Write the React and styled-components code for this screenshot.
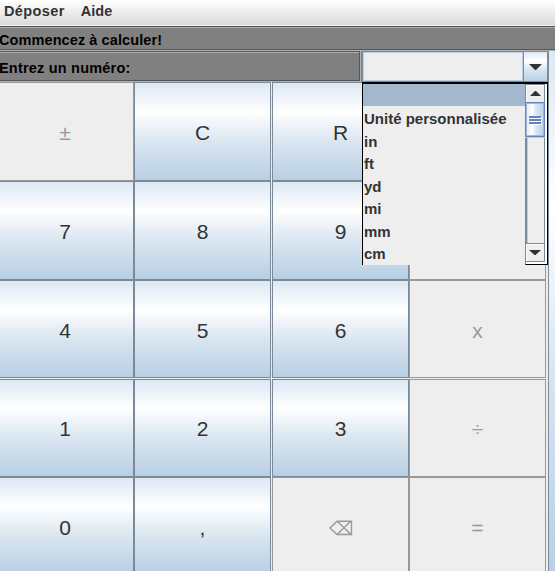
import React from "react";
import styled, { createGlobalStyle } from "styled-components";

const Global = createGlobalStyle`
  * { box-sizing: border-box; }
  body { margin: 0; overflow: hidden; font-family: "Liberation Sans", Arial, sans-serif; }
`;
const metal = "linear-gradient(to bottom, #dde8f3 0%, #ffffff 30%, #dae6f0 60%, #b8cfe5 100%)";

const Window = styled.div`
  width: 555px; height: 571px; overflow: hidden; background: #eeeeee;
  display: flex; flex-direction: column;
`;
const MenuBar = styled.nav`
  height: 26px; flex: none; display: flex; gap: 16px; padding: 2px 0 0 4px;
  background: linear-gradient(#ffffff, #dadada); border-bottom: 1px solid #eeeeee;
  font-size: 14.5px; font-weight: bold; line-height: 18px; color: #333333;
`;
const MenuItem = styled.span`letter-spacing: ${p => p.$spacing}px;`;
const Banner = styled.div`
  height: 25px; flex: none; background: #808080;
  border: solid #555555; border-top-width: 1px; border-right-width: 0; border-left-width: 0;
  border-bottom: 1px solid #b0b0b0;
  box-shadow: inset 0 1px #b0b0b0, inset 0 -1px #555555;
  font-size: 14.5px; font-weight: bold; color: #000000;
  line-height: 26px; white-space: nowrap; text-indent: -1px; letter-spacing: 0.09px;
`;
const Main = styled.div`display: flex; height: 524px; flex: none;`;
const Left = styled.div`width: 548px; flex: none;`;
const EntryRow = styled.div`display: flex; height: 31px; background: #b0b0b0;`;
const EntryLabel = styled.div`
  width: 360px; height: 30px; background: #808080; border: 1px solid #555555; border-left: 0;
  box-shadow: inset 0 1px #b0b0b0; font-size: 14.5px; font-weight: bold; line-height: 32px;
  color: #000; text-indent: -1px; letter-spacing: 0.2px;
`;
const Combo = styled.div`
  position: relative; width: 187px; height: 31px; display: flex; margin-left: 1px;
  border: 1px solid #7a8a99; border-left-width: 2px; background: #eeeeee;
`;
const ComboValue = styled.div`flex: 1; border: 1px solid #b8cfe5;`;
const ComboButton = styled.div`
  width: 24px; border-left: 1px solid #7a8a99; background: ${metal};
  display: flex; align-items: center; justify-content: center; padding-top: 1px;
`;
const Popup = styled.div`
  position: absolute; z-index: 2; left: -1px; top: 30px; width: 186px; height: 183px;
  display: flex; background: #eeeeee; border: solid #000; border-width: 2px 1px 0 1px;
`;
const List = styled.div`flex: 1; display: grid; grid-template-rows: 22px repeat(7, 22.5px);`;
const Option = styled.div`
  padding-left: 1px; font-size: 15px; font-weight: bold; line-height: 25px; color: #333;
  white-space: nowrap;
  background: ${p => p.$selected ? "#a3b8cc" : "transparent"};
`;
const ScrollBar = styled.div`
  width: 22px; display: flex; flex-direction: column; border-bottom: 1px solid #000;
  border-left: 1px solid #7a8a99; background: #fff; padding-bottom: 2px;
`;
const ScrollButton = styled.div`
  height: 19px; flex: none; width: 19px; border: 1px solid #7a8a99; border-left: 0;
  background: #eeeeee; box-shadow: inset 1px 1px #fff;
  display: flex; align-items: center; justify-content: center;
`;
const Track = styled.div`
  flex: 1; width: 19px; background: #eeeeee; border-right: 1px solid #7a8a99;
  box-shadow: inset 1px 0 #7a8a99, inset 2px 0 #b8cfe5;
`;
const Thumb = styled.div`
  height: 35px; margin: -1px 0 0 -1px; width: 20px; border: 1px solid #6382bf;
  background: linear-gradient(to right, #dde8f3, #fff 35%, #dae6f0 55%, #b8cfe5);
  box-shadow: inset 0 0 0 1px #9db8df, 0 1px #b8cfe5;
  display: flex; flex-direction: column; align-items: center; justify-content: center; gap: 1px;
`;
const Grip = styled.i`width: 12px; height: 2px; background: #6382bf; box-shadow: 1px 1px #fff;`;

const Pad = styled.div`
  display: grid; width: 546px; height: 493px;
  grid-template-columns: 134px 137px 1px 137px 137px;
  grid-template-rows: 99px 99px 98px 1px 98px 98px;
`;
const Key = styled.button`
  grid-column: ${p => p.$col}; grid-row: ${p => p.$row};
  margin: 0; padding: ${p => p.$row === 5 ? 1 : 3}px ${p => p.$col === 1 ? 3 : 0}px 0 0; border-radius: 0;
  border: 1px solid ${p => p.$off ? "#999999" : "#7a8a99"};
  border-left-width: ${p => p.$col === 1 ? 0 : 1}px;
  background: ${p => p.$off ? "#eeeeee" : metal};
  color: ${p => p.$off ? "#999999" : "#333333"};
  font-family: "Liberation Sans", Arial, sans-serif; font-size: 21px;
  display: flex; align-items: center; justify-content: center;
`;
const Side = styled.div`width: 7px; height: 524px; border-left: 1px solid #7a8a99; background: ${metal};`;

const Arrow = ({ up, w = 12, h = 6 }) => (
  <svg width={w} height={h} viewBox={`0 0 ${w} ${h}`}>
    <path fill="#333" d={up ? `M${w / 2} -0.5L${w} ${h}H0Z` : `M0 0H${w}L${w / 2} ${h + 0.5}Z`} />
  </svg>
);
const Erase = () => (
  <svg width="24" height="16" viewBox="0 0 24 16" fill="none" stroke="#999" strokeWidth="1.4">
    <path d="M1 8L8 1.2H22.5V14.5H8ZM8 1L22 14.5M22 1L8 14.5" />
  </svg>
);
const keys = [
  ["±", 1, 1, true], ["C", 2, 1], ["R", 4, 1], ["", 5, 1, true],
  ["7", 1, 2], ["8", 2, 2], ["9", 4, 2], ["", 5, 2, true],
  ["4", 1, 3], ["5", 2, 3], ["6", 4, 3], ["x", 5, 3, true],
  ["1", 1, 5], ["2", 2, 5], ["3", 4, 5], ["÷", 5, 5, true],
  ["0", 1, 6], [",", 2, 6], [<Erase key="e" />, 4, 6, true], ["=", 5, 6, true],
];

export default function App() {
  return (
    <Window>
      <Global />
      <MenuBar><MenuItem $spacing={0.4}>Déposer</MenuItem><MenuItem $spacing={0}>Aide</MenuItem></MenuBar>
      <Banner>Commencez à calculer!</Banner>
      <Main>
        <Left>
          <EntryRow>
            <EntryLabel>Entrez un numéro:</EntryLabel>
            <Combo>
              <ComboValue />
              <ComboButton><Arrow w={13} h={6} /></ComboButton>
              <Popup>
                <List>
                  <Option $selected />
                  {["Unité personnalisée", "in", "ft", "yd", "mi", "mm", "cm"].map(u => <Option key={u}>{u}</Option>)}
                </List>
                <ScrollBar>
                  <ScrollButton><Arrow up w={11} h={5} /></ScrollButton>
                  <Track><Thumb><Grip /><Grip /><Grip /></Thumb></Track>
                  <ScrollButton><Arrow w={12} h={5} /></ScrollButton>
                </ScrollBar>
              </Popup>
            </Combo>
          </EntryRow>
          <Pad>
            {keys.map(([label, col, row, off]) => <Key key={`${col}-${row}`} $col={col} $row={row} $off={off}>{label}</Key>)}
          </Pad>
        </Left>
        <Side />
      </Main>
    </Window>
  );
}
